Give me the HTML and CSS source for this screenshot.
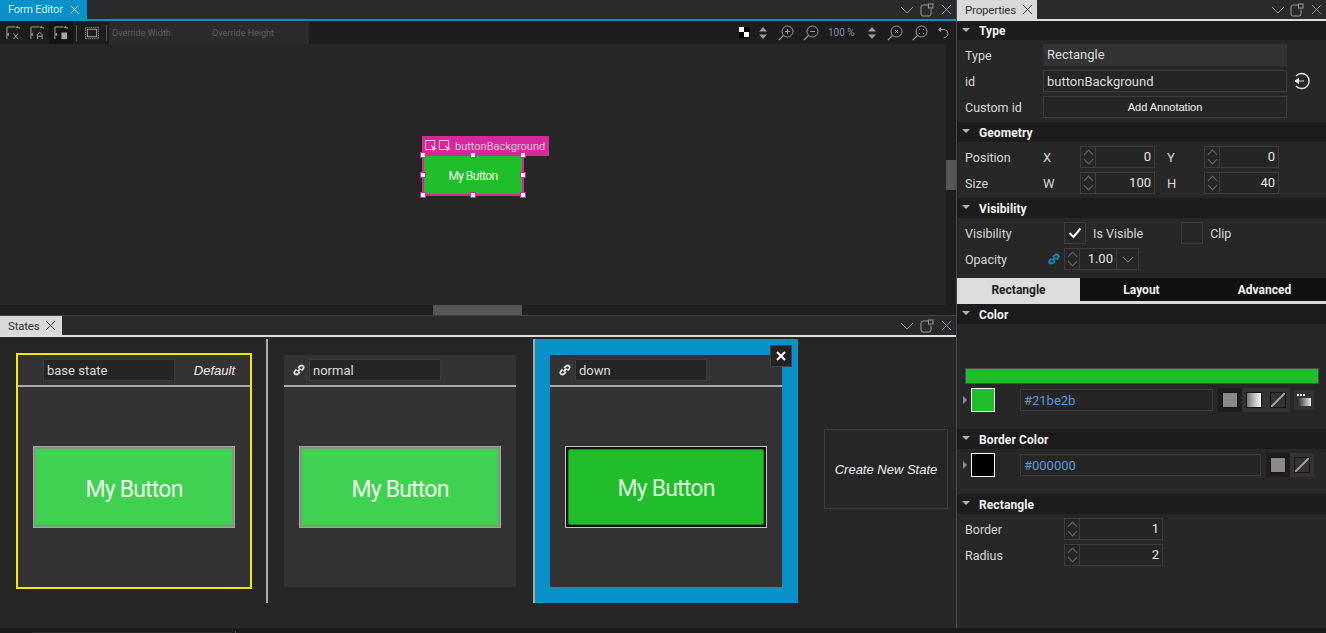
FILE: index.html
```html
<!DOCTYPE html>
<html lang="en">

<head>
    <meta charset="UTF-8">
    <title>Form Editor</title>
    <link rel="stylesheet" href="styles.css">
</head>

<body>
    <!-- shared icons -->
    <svg class="sprite" xmlns="http://www.w3.org/2000/svg">
        <symbol id="i-close" viewBox="0 0 12 12"><path d="M1 1L11 11M11 1L1 11" fill="none" stroke="currentColor"/></symbol>
        <symbol id="i-chevron" viewBox="0 0 14 8"><path d="M1 1L7 7L13 1" fill="none" stroke="currentColor"/></symbol>
        <symbol id="i-float" viewBox="0 0 14 14"><path d="M8.5 2H3Q1 2 1 4V11Q1 13 3 13H9Q11 13 11 11V6.500" fill="none" stroke="currentColor"/><rect x="8.500" y="1" width="4.500" height="4" fill="none" stroke="currentColor"/></symbol>
        <symbol id="i-link" viewBox="0 0 12 12"><path d="M5 4L7 2.200Q8.500 .8 10 2T10 5L8.500 6.500M7 8L5 9.800Q3.500 11.200 2 10T2 7L3.500 5.500M4.500 7.500L7.500 4.500" fill="none" stroke="currentColor" stroke-width="1.800"/></symbol>
        <symbol id="i-updown" viewBox="0 0 8 12"><path d="M4 0L8 4.500H0ZM4 12L8 7.500H0Z" fill="currentColor"/></symbol>
        <symbol id="i-zoom" viewBox="0 0 16 16"><circle cx="9.500" cy="6.500" r="5.500" fill="none" stroke="currentColor"/><path d="M5.500 10.500L.8 15.200" fill="none" stroke="currentColor" stroke-width="1.200"/></symbol>
        <symbol id="i-tool-corner" viewBox="0 0 15 15"><path d="M1 14V1H10M14 1V3" fill="none" stroke="currentColor"/><path d="M10 2L12 0L14 2ZM1 9L3 7V11Z" fill="currentColor"/></symbol>
        <symbol id="i-cursor" viewBox="0 0 12 12"><rect x=".5" y=".5" width="9" height="9" fill="none" stroke="currentColor"/><path d="M6 5L12 9L9 9.500L8.500 12Z" fill="currentColor"/></symbol>
    </svg>

    <div class="workspace">
        <div class="main-column">
            <div class="tab-bar tab-bar-active">
                <div class="tab tab-blue">Form Editor <svg class="tab-x"><use href="#i-close"/></svg></div>
                <div class="win-buttons">
                    <svg class="win-chevron"><use href="#i-chevron"/></svg>
                    <svg class="win-float"><use href="#i-float"/></svg>
                    <svg class="win-close"><use href="#i-close"/></svg>
                </div>
            </div>

            <div class="toolbar">
                <div class="tool"><svg class="tool-icon" viewBox="0 0 15 15"><use href="#i-tool-corner"/><path d="M8 8L13 14M13 8L8 14" fill="none" stroke="currentColor"/></svg></div>
                <div class="tool"><svg class="tool-icon" viewBox="0 0 15 15"><use href="#i-tool-corner"/><path d="M8 14V9L10.500 7L13 9V14M8 11H13" fill="none" stroke="currentColor"/></svg></div>
                <div class="tool tool-on"><svg class="tool-icon" viewBox="0 0 15 15"><use href="#i-tool-corner"/><rect x="8" y="7" width="6" height="7" fill="currentColor"/></svg></div>
                <span class="tool-sep"></span>
                <div class="tool tool-frame"><svg class="tool-icon" viewBox="0 0 15 15"><rect x="2.500" y="3.500" width="10" height="8" fill="none" stroke="currentColor"/><rect x=".5" y="1.500" width="14" height="12" fill="none" stroke="currentColor" stroke-dasharray="1 1"/></svg></div>
                <span class="tool-sep"></span>
                <div class="override-box">
                    <span class="override-field">Override Width</span>
                    <span class="override-field">Override Height</span>
                </div>
                <div class="toolbar-right">
                    <span class="checker"></span>
                    <svg class="ico-updown"><use href="#i-updown"/></svg>
                    <svg class="ico-zoom"><use href="#i-zoom"/><path d="M7 6.500H12M9.500 4V9" fill="none" stroke="currentColor"/></svg>
                    <svg class="ico-zoom"><use href="#i-zoom"/><path d="M7 6.500H12" fill="none" stroke="currentColor"/></svg>
                    <span class="zoom-level">100 %</span>
                    <svg class="ico-updown"><use href="#i-updown"/></svg>
                    <svg class="ico-zoom"><use href="#i-zoom"/><path d="M8 5L11 8M11 5L8 8" fill="none" stroke="currentColor"/></svg>
                    <svg class="ico-zoom"><use href="#i-zoom"/><path d="M7 4.500H8M11 4.500H12M7 8.500H8M11 8.500H12" fill="none" stroke="currentColor"/></svg>
                    <svg class="ico-undo" viewBox="0 0 12 12"><path d="M3 2.500H7Q11 3 11 6.500T6.500 11" fill="none" stroke="currentColor"/><path d="M1 2.500L4 0V5Z" fill="currentColor"/></svg>
                </div>
            </div>

            <div class="canvas-wrap">
                <div class="canvas">
                    <div class="sel-tag">
                        <svg class="sel-cursor"><use href="#i-cursor"/></svg>
                        <svg class="sel-cursor"><use href="#i-cursor"/></svg>
                        <span>buttonBackground</span>
                    </div>
                    <div class="sel-item">
                        My Button
                        <i class="handle h-tl"></i><i class="handle h-tc"></i><i class="handle h-tr"></i>
                        <i class="handle h-ml"></i><i class="handle h-mr"></i>
                        <i class="handle h-bl"></i><i class="handle h-bc"></i><i class="handle h-br"></i>
                    </div>
                </div>
                <div class="vscroll"><div class="vscroll-thumb"></div></div>
                <div class="hscroll"><div class="hscroll-thumb"></div></div>
            </div>

            <div class="tab-bar states-tabs">
                <div class="tab tab-light">States <svg class="tab-x"><use href="#i-close"/></svg></div>
                <div class="win-buttons">
                    <svg class="win-chevron"><use href="#i-chevron"/></svg>
                    <svg class="win-float"><use href="#i-float"/></svg>
                    <svg class="win-close"><use href="#i-close"/></svg>
                </div>
            </div>

            <div class="states">
                <div class="state-card state-base">
                    <div class="state-head">
                        <span class="state-link"></span>
                        <span class="state-name">base state</span>
                        <em class="state-default">Default</em>
                    </div>
                    <div class="state-body"><div class="preview">My Button</div></div>
                </div>

                <span class="states-divider"></span>

                <div class="state-card">
                    <div class="state-head">
                        <span class="state-link"><svg class="link-icon"><use href="#i-link"/></svg></span>
                        <span class="state-name">normal</span>
                    </div>
                    <div class="state-body"><div class="preview">My Button</div></div>
                </div>

                <div class="state-active">
                    <div class="state-card">
                        <div class="state-head">
                            <span class="state-link"><svg class="link-icon"><use href="#i-link"/></svg></span>
                            <span class="state-name">down</span>
                        </div>
                        <div class="state-body"><div class="preview preview-down"><div class="preview-inner">My Button</div></div></div>
                    </div>
                    <div class="state-remove"><svg viewBox="0 0 12 12"><path d="M2 2L10 10M10 2L2 10" fill="none" stroke="currentColor" stroke-width="2"/></svg></div>
                </div>

                <div class="state-new">Create New State</div>
            </div>
        </div>

        <div class="props">
            <div class="tab-bar tab-bar-props">
                <div class="tab tab-light tab-props">Properties <svg class="tab-x"><use href="#i-close"/></svg></div>
                <div class="win-buttons win-props">
                    <svg class="win-chevron"><use href="#i-chevron"/></svg>
                    <svg class="win-float"><use href="#i-float"/></svg>
                    <svg class="win-close"><use href="#i-close"/></svg>
                </div>
            </div>

            <div class="sec-head sec-first">Type</div>
            <div class="sec-body">
                <div class="row">
                    <label class="row-label">Type</label>
                    <div class="field field-static">Rectangle</div>
                </div>
                <div class="row">
                    <label class="row-label">id</label>
                    <div class="field">buttonBackground</div>
                    <svg class="id-export" viewBox="0 0 18 18"><path d="M4 4A7.500 7.500 0 1 1 4 14" fill="none" stroke="currentColor" stroke-width="1.400"/><path d="M3 9H12M3 9L6.500 6.500V11.500Z" fill="currentColor" stroke="currentColor"/></svg>
                </div>
                <div class="row">
                    <label class="row-label">Custom id</label>
                    <div class="field field-button">Add Annotation</div>
                </div>
            </div>

            <div class="sec-head">Geometry</div>
            <div class="sec-body">
                <div class="row">
                    <label class="row-label">Position</label>
                    <span class="axis">X</span>
                    <div class="spin"><div class="spin-arrows"></div><div class="spin-value">0</div></div>
                    <span class="axis axis-second">Y</span>
                    <div class="spin"><div class="spin-arrows"></div><div class="spin-value">0</div></div>
                </div>
                <div class="row">
                    <label class="row-label">Size</label>
                    <span class="axis">W</span>
                    <div class="spin"><div class="spin-arrows"></div><div class="spin-value">100</div></div>
                    <span class="axis axis-second">H</span>
                    <div class="spin"><div class="spin-arrows"></div><div class="spin-value">40</div></div>
                </div>
            </div>

            <div class="sec-head">Visibility</div>
            <div class="sec-body sec-vis">
                <div class="row">
                    <label class="row-label row-label-wide">Visibility</label>
                    <div class="check"><svg viewBox="0 0 14 12"><path d="M1.500 6L5.500 10L12.500 1.500" fill="none" stroke="currentColor" stroke-width="2"/></svg></div>
                    <span class="check-text">Is Visible</span>
                    <div class="check check-clip"></div>
                    <span class="check-text">Clip</span>
                </div>
                <div class="row">
                    <label class="row-label row-label-link">Opacity</label>
                    <svg class="opacity-link"><use href="#i-link"/></svg>
                    <div class="spin spin-opacity">
                        <div class="spin-arrows"></div>
                        <div class="spin-value">1.00</div>
                        <div class="spin-drop"><svg class="spin-chevron"><use href="#i-chevron"/></svg></div>
                    </div>
                </div>
            </div>

            <div class="prop-tabs">
                <div class="prop-tab prop-tab-on">Rectangle</div>
                <div class="prop-tab">Layout</div>
                <div class="prop-tab">Advanced</div>
            </div>

            <div class="sec-head">Color</div>
            <div class="sec-body sec-color">
                <div class="color-bar"></div>
                <div class="color-row">
                    <span class="expand"></span>
                    <span class="swatch swatch-green"></span>
                    <div class="field color-field">#21be2b</div>
                    <div class="mode-group">
                        <span class="mode mode-on"><i class="mode-solid"></i></span>
                        <span class="mode"><i class="mode-grad"></i></span>
                        <span class="mode"><i class="mode-none"></i></span>
                    </div>
                    <span class="grad-picker"><i class="grad-dots"></i><i class="grad-bar"></i></span>
                </div>
            </div>

            <div class="sec-head">Border Color</div>
            <div class="sec-body sec-border">
                <div class="color-row">
                    <span class="expand"></span>
                    <span class="swatch swatch-black"></span>
                    <div class="field color-field">#000000</div>
                    <div class="mode-group">
                        <span class="mode mode-on"><i class="mode-solid"></i></span>
                        <span class="mode"><i class="mode-none"></i></span>
                    </div>
                </div>
            </div>

            <div class="sec-head">Rectangle</div>
            <div class="sec-body">
                <div class="row">
                    <label class="row-label row-label-wide">Border</label>
                    <div class="spin spin-long"><div class="spin-arrows"></div><div class="spin-value">1</div></div>
                </div>
                <div class="row">
                    <label class="row-label row-label-wide">Radius</label>
                    <div class="spin spin-long"><div class="spin-arrows"></div><div class="spin-value">2</div></div>
                </div>
            </div>
        </div>
    </div>

    <div class="status-strip"><span class="status-bar"></span><span class="status-tick"></span></div>
</body>

</html>
```

FILE: styles.css
```css
* {
    box-sizing: border-box;
}

html,
body {
    height: 100%;
}

body {
    margin: 0;
    overflow: hidden;
    background-color: #262626;
    color: #e2e2e2;
    font-family: Roboto, "Liberation Sans", sans-serif;
    font-size: 13px;
}

.sprite {
    display: none;
}

.workspace {
    display: flex;
    height: 628px;
}

.main-column {
    width: 956px;
    display: flex;
    flex-direction: column;
}

.props {
    width: 370px;
    border-left: 1px solid #4a4a4a;
    background-color: #272727;
}

/* tab bars */
.tab-bar {
    display: flex;
    justify-content: space-between;
    height: 21px;
    background-color: #292a2d;
    border-bottom: 2px solid #0891c9;
}

.tab {
    display: flex;
    align-items: center;
    height: 19px;
    font-size: 11.500px;
    letter-spacing: -0.2px;
    white-space: nowrap;
}

.tab-blue {
    width: 87px;
    padding-left: 8px;
    background-color: #0891c9;
    color: #cfeaf6;
    font-size: 11px;
}

.tab-light {
    width: 62px;
    padding-left: 8px;
    background-color: #d9d9d9;
    color: #333;
}

.tab-x {
    width: 11px;
    height: 11px;
    margin-left: 6px;
}

.tab-blue .tab-x {
    color: #e6f5fb;
}

.states-tabs,
.tab-bar-props {
    border-bottom-color: #dcdcdc;
}

.states-tabs {
    border-top: 1px solid #444;
    height: 22px;
    flex-shrink: 0;
}

.tab-props {
    width: 80px;
}

.win-buttons {
    display: flex;
    align-items: center;
    height: 19px;
    padding-right: 4px;
    color: #9a9a9a;
}

.win-chevron {
    width: 14px;
    height: 8px;
}

.win-float {
    width: 14px;
    height: 14px;
    margin-left: 6px;
}

.win-close {
    width: 11px;
    height: 11px;
    margin-left: 7px;
}

.win-props .win-float {
    margin-left: 5px;
}

/* form editor toolbar */
.toolbar {
    display: flex;
    align-items: center;
    height: 23px;
    background-color: #1d1d1d;
    color: #a8a8a8;
}

.tool {
    display: flex;
    align-items: center;
    justify-content: center;
    width: 24px;
    height: 23px;
}

.tool:first-child {
    margin-left: 1px;
}

.tool-on {
    background-color: #141414;
}

.tool-frame {
    width: 29px;
}

.tool-icon {
    width: 14px;
    height: 14px;
}

.tool-sep {
    width: 1px;
    height: 16px;
    margin-left: 3px;
    background-color: #555;
}

.tool-frame + .tool-sep {
    margin-left: 0;
}

.override-box {
    display: flex;
    width: 200px;
    height: 22px;
    margin-left: 2px;
    padding-left: 3px;
    align-items: center;
    background-color: #2b2b2b;
    color: #5c6066;
    font-size: 9px;
}

.override-field {
    width: 100px;
    flex-shrink: 0;
    white-space: nowrap;
}

.toolbar-right {
    display: flex;
    align-items: center;
    margin-left: auto;
    padding-right: 7px;
    color: #9c9c9c;
}

.checker {
    width: 11px;
    height: 11px;
    margin-right: 9px;
    background-color: #000;
    background-image: linear-gradient(#fff, #fff), linear-gradient(#fff, #fff);
    background-size: 5px 5px;
    background-position: 0 0, 5px 5px;
    background-repeat: no-repeat;
}

.ico-updown {
    width: 8px;
    height: 12px;
}

.ico-zoom {
    width: 16px;
    height: 16px;
    margin-left: 9px;
}

.ico-updown + .ico-zoom {
    margin-left: 11px;
}

.zoom-level {
    width: 26px;
    margin: 0 14px 0 9px;
    color: #7d93a3;
    font-size: 10px;
    white-space: nowrap;
}

.ico-undo {
    width: 12px;
    height: 12px;
    margin-left: 9px;
}

/* canvas */
.canvas-wrap {
    position: relative;
    height: 271px;
    background-color: #262626;
}

.canvas {
    height: 261px;
}

.vscroll {
    position: absolute;
    top: 0;
    right: 0;
    bottom: 10px;
    width: 10px;
    background-color: #1e1e1e;
}

.vscroll-thumb {
    position: absolute;
    top: 116px;
    left: 0;
    width: 10px;
    height: 30px;
    background-color: #565656;
}

.hscroll {
    position: absolute;
    left: 0;
    right: 0;
    bottom: 0;
    height: 10px;
    background-color: #1e1e1e;
}

.hscroll-thumb {
    position: absolute;
    left: 433px;
    top: 0;
    width: 89px;
    height: 10px;
    background-color: #565656;
}

.sel-tag {
    position: absolute;
    left: 422px;
    top: 92px;
    display: flex;
    align-items: center;
    width: 127px;
    height: 20px;
    padding-left: 3px;
    background-color: #d6289b;
    color: #e6c3d9;
    font-size: 11px;
    white-space: nowrap;
}

.sel-cursor {
    width: 12px;
    height: 12px;
    margin-right: 2px;
    flex-shrink: 0;
}

.sel-tag span {
    margin-left: 2px;
}

.sel-item {
    position: absolute;
    left: 422px;
    top: 110px;
    display: flex;
    align-items: center;
    justify-content: center;
    width: 102px;
    height: 42px;
    padding-top: 1px;
    border: 2px solid #d6289b;
    background-color: #21be2b;
    color: #f2fbf2;
    font-size: 12px;
    letter-spacing: -0.6px;
}

.handle {
    position: absolute;
    width: 6px;
    height: 6px;
    background-color: #fff;
    border: 1px solid #d6289b;
}

.h-tl, .h-ml, .h-bl { left: -4px; }
.h-tc, .h-bc { left: 46px; }
.h-tr, .h-mr, .h-br { left: 96px; }
.h-tl, .h-tc, .h-tr { top: -4px; }
.h-ml, .h-mr { top: 16px; }
.h-bl, .h-bc, .h-br { top: 36px; }

/* states */
.states {
    display: flex;
    align-items: center;
    height: 264px;
    margin-top: 2px;
    padding-left: 16px;
}

.state-card {
    width: 232px;
    height: 232px;
    background-color: #333;
    flex-shrink: 0;
}

.state-base {
    width: 236px;
    height: 236px;
    border: 2px solid #ffe500;
}

.state-head {
    display: flex;
    align-items: center;
    height: 32px;
    border-bottom: 2px solid #aaa;
}

.state-link {
    display: flex;
    width: 25px;
    justify-content: flex-end;
    padding-right: 4px;
}

.link-icon {
    width: 12px;
    height: 12px;
    color: #e2e2e2;
}

.state-name {
    width: 132px;
    height: 22px;
    padding-left: 3px;
    line-height: 21px;
    background-color: #252525;
    border: 1px solid #3d3d3d;
    color: #dcdcdc;
}

.state-default {
    margin-left: auto;
    padding-right: 15px;
    color: #f0f0f0;
    font-family: "Liberation Sans", sans-serif;
}

.state-body {
    display: flex;
    align-items: center;
    justify-content: center;
    height: 200px;
}

.preview {
    display: flex;
    align-items: center;
    justify-content: center;
    width: 202px;
    height: 82px;
    padding-top: 5px;
    border: 1px solid #a4a4a4;
    box-shadow: inset 0 0 0 2px #7b9a7f;
    background-color: #41d150;
    color: #eafbea;
    font-size: 23px;
    letter-spacing: -0.8px;
}

.preview-down {
    padding: 2px;
    background-color: #111;
    border-color: #c4c4c4;
    box-shadow: none;
}

.preview-inner {
    display: flex;
    align-items: center;
    justify-content: center;
    width: 100%;
    height: 100%;
    padding-top: 3px;
    border: 1px solid #178a1f;
    border-radius: 2px;
    background-color: #21be2b;
    color: #dcf5de;
}

.states-divider {
    width: 2px;
    height: 264px;
    margin: 0 16px 0 14px;
    background-color: #aaa;
    flex-shrink: 0;
}

.state-active {
    position: relative;
    width: 265px;
    height: 264px;
    margin-left: 17px;
    padding: 16px 16px 16px 15px;
    border-left: 2px solid #aaa;
    background-color: #0891c9;
    flex-shrink: 0;
}

.state-remove {
    position: absolute;
    top: 6px;
    right: 6px;
    display: flex;
    align-items: center;
    justify-content: center;
    width: 22px;
    height: 22px;
    border: 1px solid #444;
    background-color: #222;
    color: #fff;
}

.state-remove svg {
    width: 12px;
    height: 12px;
}

.state-new {
    display: flex;
    align-items: center;
    justify-content: center;
    width: 124px;
    height: 80px;
    margin: 0 0 4px 26px;
    border: 1px solid #3d3d3d;
    color: #eee;
    font-family: "Liberation Sans", sans-serif;
    font-size: 13px;
    font-style: italic;
    white-space: nowrap;
}

/* properties */
.sec-head {
    position: relative;
    height: 20px;
    padding-left: 22px;
    line-height: 22px;
    background-color: #1c1c1c;
    color: #f2f2f2;
    font-size: 12px;
    font-weight: 700;
    letter-spacing: .1px;
}

.sec-first {
    height: 19px;
    line-height: 20px;
}

.sec-head::before {
    content: "";
    position: absolute;
    left: 5px;
    top: 7px;
    border-left: 4px solid transparent;
    border-right: 4px solid transparent;
    border-top: 4px solid #b5b5b5;
}

.sec-body {
    display: flex;
    flex-direction: column;
    gap: 4px;
    padding: 4px 0 4px 8px;
}

.sec-vis {
    padding-bottom: 8px;
}

.row {
    display: flex;
    align-items: center;
    height: 22px;
}

.row-label {
    width: 78px;
    color: #d8d8d8;
    font-size: 12.500px;
}

.row-label-wide {
    width: 99px;
}

.row-label-link {
    width: 83px;
}

.field {
    width: 244px;
    height: 22px;
    padding-left: 3px;
    line-height: 21px;
    background-color: #252525;
    border: 1px solid #3d3d3d;
    color: #dcdcdc;
}

.field-static {
    line-height: 20px;
    background-color: #333;
    border-color: #333;
}

.field-button {
    padding-left: 0;
    text-align: center;
    color: #f2f2f2;
    font-family: "Liberation Sans", sans-serif;
    font-size: 11px;
}

.id-export {
    width: 18px;
    height: 18px;
    margin-left: 5px;
    color: #e6e6e6;
}

.axis {
    width: 37px;
    color: #d8d8d8;
}

.axis-second {
    width: 37px;
    margin-left: 12px;
}

.spin {
    display: flex;
    width: 75px;
    height: 22px;
    border: 1px solid #3d3d3d;
    background-color: #252525;
}

.spin-long {
    width: 99px;
}

.spin-opacity {
    width: 75px;
}

.spin-arrows {
    position: relative;
    width: 15px;
    border-right: 1px solid #3d3d3d;
    flex-shrink: 0;
}

.spin-arrows::before,
.spin-arrows::after {
    content: "";
    position: absolute;
    left: 4px;
    width: 6px;
    height: 6px;
    border-left: 1px solid #6a6a6a;
    border-top: 1px solid #6a6a6a;
}

.spin-arrows::before {
    top: 4px;
    transform: rotate(45deg);
}

.spin-arrows::after {
    bottom: 4px;
    transform: rotate(225deg);
}

.spin-value {
    flex: 1;
    padding-right: 3px;
    line-height: 20px;
    text-align: right;
    color: #e6e6e6;
}

.spin-drop {
    display: flex;
    align-items: center;
    justify-content: center;
    width: 22px;
    border-left: 1px solid #3d3d3d;
    flex-shrink: 0;
}

.spin-chevron {
    width: 12px;
    height: 7px;
    color: #a0a0a0;
}

.check {
    display: flex;
    align-items: center;
    justify-content: center;
    width: 22px;
    height: 22px;
    border: 1px solid #3d3d3d;
    color: #fff;
}

.check svg {
    width: 14px;
    height: 12px;
}

.check-text {
    margin-left: 7px;
    color: #d8d8d8;
    font-size: 12.500px;
}

.check-clip {
    margin-left: 38px;
}

.opacity-link {
    width: 12px;
    height: 12px;
    margin-right: 4px;
    color: #0891c9;
}

.prop-tabs {
    display: flex;
    height: 26px;
    padding-bottom: 3px;
    background-color: #111;
    border-bottom: 3px solid #dcdcdc;
}

.prop-tab {
    width: 123px;
    height: 23px;
    line-height: 24px;
    text-align: center;
    color: #f2f2f2;
    font-size: 12px;
    font-weight: 700;
}

.prop-tab-on {
    background-color: #dcdcdc;
    color: #222;
}

.sec-color {
    height: 105px;
    padding-top: 44px;
    gap: 4px;
}

.sec-border {
    height: 45px;
}

.color-bar {
    width: 354px;
    height: 16px;
    background-color: #21be2b;
    border: 1px solid #4a4a4a;
    flex-shrink: 0;
}

.color-row {
    display: flex;
    align-items: center;
    height: 24px;
}

.expand {
    width: 0;
    height: 0;
    margin-right: 4px;
    margin-left: -2px;
    border-top: 4px solid transparent;
    border-bottom: 4px solid transparent;
    border-left: 4px solid #8a8a8a;
}

.swatch {
    width: 24px;
    height: 24px;
    border: 1px solid #fff;
    flex-shrink: 0;
}

.swatch-green {
    background-color: #21be2b;
}

.swatch-black {
    background-color: #000;
}

.color-field {
    width: 193px;
    margin-left: 25px;
    color: #5f97d6;
}

.sec-border .color-field {
    width: 241px;
}

.mode-group {
    display: flex;
    margin-left: 5px;
    background-color: #333;
}

.mode {
    display: flex;
    align-items: center;
    justify-content: center;
    width: 24px;
    height: 24px;
}

.mode-on {
    background-color: #1d1d1d;
}

.mode i {
    display: block;
    width: 16px;
    height: 16px;
    border: 1px solid #260f14;
}

.mode-solid {
    background-color: #8a8a8a;
}

.mode-grad {
    background: linear-gradient(90deg, #777, #fff);
}

.mode-none {
    background: linear-gradient(135deg, #333 45%, #999 45%, #999 55%, #333 55%);
}

.grad-picker {
    display: flex;
    flex-direction: column;
    justify-content: center;
    width: 20px;
    height: 20px;
    margin-left: 4px;
    padding: 0 3px;
    background-color: #333;
}

.grad-dots {
    display: block;
    width: 8px;
    height: 2px;
    margin-bottom: 2px;
    background-image: linear-gradient(90deg, #fff 2px, transparent 2px);
    background-size: 3px 2px;
}

.grad-bar {
    display: block;
    height: 8px;
    background: linear-gradient(90deg, #222, #eee);
}

/* strip under the panels */
.status-strip {
    position: relative;
    height: 5px;
    background-color: #1b1b1b;
}

.status-bar {
    position: absolute;
    left: 32px;
    bottom: 0;
    width: 200px;
    height: 1px;
    background-color: #2a2a2a;
}

.status-tick {
    position: absolute;
    left: 235px;
    bottom: 0;
    width: 1px;
    height: 2px;
    background-color: #555;
}
```
